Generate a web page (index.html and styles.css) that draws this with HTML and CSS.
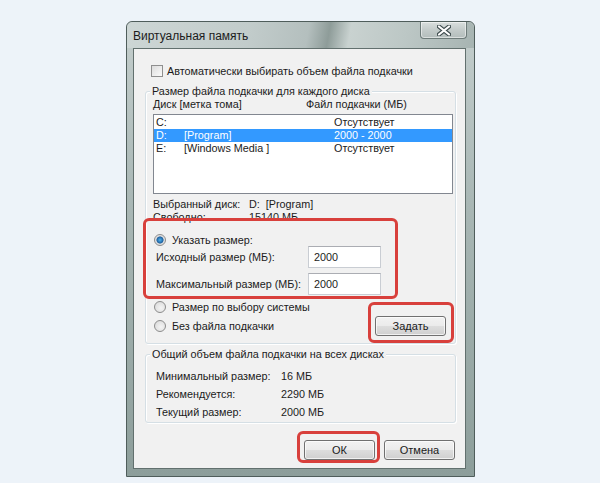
FILE: index.html
```html
<!DOCTYPE html>
<html lang="ru">
<head>
    <meta charset="UTF-8">
    <title>Виртуальная память</title>
    <link rel="stylesheet" href="styles.css">
</head>
<body>
    <div class="window">
        <!-- Заголовок окна -->
        <div class="titlebar">
            <span class="title">Виртуальная память</span>
            <div class="close-btn">
                <svg width="14" height="11" viewBox="0 0 14 11">
                    <path d="M2 1.5 L12 9.5 M12 1.5 L2 9.5" stroke="#3c4a4c" stroke-width="4.2" stroke-linecap="round"/>
                    <path d="M2 1.5 L12 9.5 M12 1.5 L2 9.5" stroke="#ffffff" stroke-width="2.2" stroke-linecap="round"/>
                </svg>
            </div>
        </div>

        <div class="client">
            <div class="check-row"><span class="checkbox"></span>Автоматически выбирать объем файла подкачки</div>

            <!-- Размер для каждого диска -->
            <div class="group group-disks">
                <div class="group-title">Размер файла подкачки для каждого диска</div>
                <div class="list-head">
                    <span class="head-drive">Диск [метка тома]</span>
                    <span>Файл подкачки (МБ)</span>
                </div>
                <div class="listbox">
                    <div class="list-row"><span class="c-letter">C:</span><span class="c-label"></span><span>Отсутствует</span></div>
                    <div class="list-row selected"><span class="c-letter">D:</span><span class="c-label">[Program]</span><span>2000 - 2000</span></div>
                    <div class="list-row"><span class="c-letter">E:</span><span class="c-label">[Windows Media ]</span><span>Отсутствует</span></div>
                </div>
                <div class="info-row first"><span class="info-label">Выбранный диск:</span><span>D:&nbsp;&nbsp;[Program]</span></div>
                <div class="info-row"><span class="info-label">Свободно:</span><span>15140 МБ</span></div>

                <div class="radio-row custom"><span class="radio checked"></span>Указать размер:</div>
                <div class="size-row"><span class="size-label">Исходный размер (МБ):</span><span class="textbox">2000</span></div>
                <div class="size-row second"><span class="size-label">Максимальный размер (МБ):</span><span class="textbox">2000</span></div>
                <div class="radio-row"><span class="radio"></span>Размер по выбору системы</div>
                <div class="radio-row last">
                    <span class="radio-inline"><span class="radio"></span>Без файла подкачки</span>
                    <button class="btn btn-set">Задать</button>
                </div>
            </div>

            <!-- Итог по всем дискам -->
            <div class="group group-total">
                <div class="group-title">Общий объем файла подкачки на всех дисках</div>
                <div class="total-rows">
                    <div class="total-row"><span class="total-label">Минимальный размер:</span><span>16 МБ</span></div>
                    <div class="total-row"><span class="total-label">Рекомендуется:</span><span>2290 МБ</span></div>
                    <div class="total-row"><span class="total-label">Текущий размер:</span><span>2000 МБ</span></div>
                </div>
            </div>

            <div class="dialog-buttons">
                <button class="btn">ОК</button>
                <button class="btn">Отмена</button>
            </div>
        </div>

        <!-- Красные пометки поверх окна -->
        <div class="mark mark-size"></div>
        <div class="mark mark-set"></div>
        <div class="mark mark-ok"></div>
    </div>
</body>
</html>
```

FILE: styles.css
```css
body {
    margin: 0;
    background-color: #edf3f9;
    font-family: 'Liberation Sans', Arial, sans-serif;
    font-size: 10.8px;
    color: #1b1b1b;
}

.window {
    position: relative;
    margin: 21px 0 0 126px;
    width: 349px;
    height: 456px;
    box-sizing: border-box;
    padding: 0 8px 8px 6px;
    border: 1px solid #4f5d5b;
    border-radius: 6px 6px 0 0;
    background: linear-gradient(180deg, #c4cecd 0%, #a9b7b5 40%, #8d9e9b 100%);
}

/* Заголовок окна */
.titlebar {
    height: 26px;
    display: flex;
    justify-content: space-between;
    align-items: flex-start;
    margin: 0 -8px 0 -6px;
    padding: 0 7px 0 6px;
    border-radius: 6px 6px 0 0;
    background: linear-gradient(100deg, #cdd6d5 0%, #c2cccb 35%, #b4bfbe 52%, #8e9c99 58%, #c9d2d0 64%, #bcc7c5 80%, #a7b4b2 100%);
}

.title {
    margin-top: 7px;
    font-size: 12px;
    color: #1c1c1c;
}

.close-btn {
    width: 45px;
    height: 16px;
    display: flex;
    justify-content: center;
    align-items: center;
    border: 1px solid #6d7b79;
    border-top: none;
    border-radius: 0 0 4px 4px;
    background: linear-gradient(180deg, #d9dfde 0%, #c3cbca 50%, #b3bdbb 100%);
    box-shadow: inset 0 0 0 1px rgba(255, 255, 255, 0.5);
}

.client {
    height: 421px;
    box-sizing: border-box;
    padding-top: 15px;
    background-color: #f1f1f1;
    border: 1px solid #62706e;
}

.check-row {
    display: flex;
    align-items: center;
    height: 14px;
    margin-left: 17px;
}

.checkbox {
    width: 10px;
    height: 10px;
    margin-right: 4px;
    border: 1px solid #8f8f8f;
    background: linear-gradient(135deg, #dcdcdc 0%, #fbfbfb 100%);
}

/* Рамки групп */
.group {
    margin: 13px 9px 0 11px;
    padding: 0 2px 7px 7px;
    border: 1px solid #d5dfe5;
    border-radius: 3px;
    box-shadow: inset 1px 1px 0 #ffffff, 1px 1px 0 #ffffff;
}

.group-title {
    width: fit-content;
    margin: -8px 0 0 -3px;
    padding: 0 2px;
    line-height: 14px;
    background-color: #f1f1f1;
}

.list-head {
    display: flex;
    line-height: 14px;
    margin-top: -1px;
}

.head-drive {
    width: 153px;
}

.listbox {
    height: 80px;
    box-sizing: border-box;
    margin-top: 3px;
    padding-top: 1px;
    background-color: #ffffff;
    border: 1px solid #828790;
}

.list-row {
    display: flex;
    height: 13px;
    line-height: 13px;
    padding-left: 2px;
}

.list-row.selected {
    background-color: #3399ff;
    color: #ffffff;
}

.c-letter {
    width: 28px;
}

.c-label {
    width: 150px;
}

.info-row {
    display: flex;
    line-height: 13px;
}

.info-row.first {
    margin-top: 4px;
}

.info-label {
    width: 96px;
}

.radio-row {
    display: flex;
    align-items: center;
    height: 14px;
    margin-top: 5px;
}

.radio-row.custom {
    margin-top: 9px;
}

.radio-row.last {
    height: 20px;
    margin-top: 2px;
    justify-content: space-between;
    padding-right: 7px;
}

.radio-inline {
    display: flex;
    align-items: center;
}

.radio {
    width: 10px;
    height: 10px;
    margin: 0 6px 0 1px;
    border: 1px solid #8c8c8c;
    border-radius: 50%;
    background: radial-gradient(circle at 60% 60%, #f4f4f4 0%, #d6d6d6 100%);
}

.radio.checked {
    background: radial-gradient(circle, #4fb4ee 0%, #1f5f9e 45%, #dcdcdc 55%, #f2f2f2 100%);
}

.size-row {
    display: flex;
    align-items: center;
    height: 22px;
    margin-top: -1px;
    padding-left: 3px;
}

.size-row.second {
    margin-top: 5px;
}

.size-label {
    width: 152px;
}

.textbox {
    width: 73px;
    height: 22px;
    box-sizing: border-box;
    padding: 3px 5px;
    line-height: 14px;
    background-color: #ffffff;
    border: 1px solid #c9cdd3;
    border-top-color: #abadb3;
}

/* Кнопки */
.btn {
    width: 71px;
    height: 20px;
    padding: 0;
    font-family: inherit;
    font-size: 11px;
    color: #1b1b1b;
    border: 1px solid #707070;
    border-radius: 3px;
    background: linear-gradient(180deg, #f2f2f2 0%, #ebebeb 48%, #dddddd 52%, #cfcfcf 100%);
    box-shadow: inset 0 0 0 1px rgba(255, 255, 255, 0.7);
}

.group-total {
    margin-top: 10px;
    padding-bottom: 1px;
}

.total-rows {
    margin-top: 6px;
    padding-left: 3px;
}

.total-row {
    display: flex;
    line-height: 18px;
}

.total-label {
    width: 125px;
}

.dialog-buttons {
    display: flex;
    justify-content: flex-end;
    gap: 9px;
    margin: 17px 10px 0 0;
}

/* Красные пометки */
.mark {
    position: absolute;
    box-sizing: border-box;
    border: 3px solid #d8403c;
    border-radius: 6px;
}

.mark-size {
    left: 16px;
    top: 196px;
    width: 255px;
    height: 81px;
}

.mark-set {
    left: 241px;
    top: 280px;
    width: 86px;
    height: 41px;
}

.mark-ok {
    left: 170px;
    top: 409px;
    width: 83px;
    height: 32px;
}
```
